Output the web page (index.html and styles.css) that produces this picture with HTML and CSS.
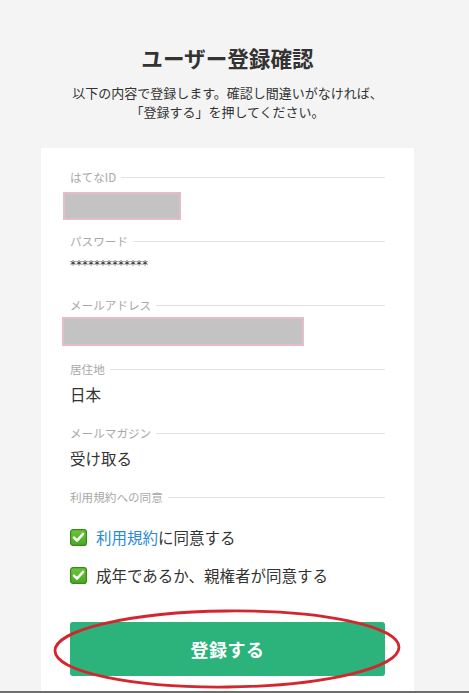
FILE: index.html
```html
<!DOCTYPE html>
<html lang="ja">
<head>
<meta charset="utf-8">
<title>ユーザー登録確認</title>
<link rel="stylesheet" href="styles.css">
</head>
<body>
<div class="page">
  <div class="column">
    <header class="head">
      <h1 class="title">ユーザー登録確認</h1>
      <p class="lead">以下の内容で登録します。確認し間違いがなければ、<br>「登録する」を押してください。</p>
    </header>
    <main class="card">
      <section class="field">
        <div class="label">はてなID</div>
        <div class="value"><span class="redact redact-id"></span></div>
      </section>
      <section class="field">
        <div class="label">パスワード</div>
        <div class="value value-pass">*************</div>
      </section>
      <section class="field field-mail">
        <div class="label">メールアドレス</div>
        <div class="value value-mail"><span class="redact redact-mail"></span></div>
      </section>
      <section class="field">
        <div class="label">居住地</div>
        <div class="value value-text">日本</div>
      </section>
      <section class="field">
        <div class="label">メールマガジン</div>
        <div class="value value-text">受け取る</div>
      </section>
      <section class="field field-agree">
        <div class="label">利用規約への同意</div>
        <ul class="checks">
          <li class="check">
            <svg class="checkbox" viewBox="0 0 17 17" width="17" height="17"><defs><linearGradient id="cg" x1="0" y1="0" x2="0" y2="1"><stop offset="0" stop-color="#6cc63a"/><stop offset="1" stop-color="#4aa824"/></linearGradient></defs><rect x="0.6" y="0.6" width="15.8" height="15.8" rx="2.5" fill="url(#cg)" stroke="#3a8a18" stroke-width="1.2"/><path d="M4 8.6 L7 11.6 L13 5" fill="none" stroke="#fff" stroke-width="2.6" stroke-linecap="round" stroke-linejoin="round"/></svg>
            <span><a class="link" href="#">利用規約</a>に同意する</span>
          </li>
          <li class="check">
            <svg class="checkbox" viewBox="0 0 17 17" width="17" height="17"><rect x="0.6" y="0.6" width="15.8" height="15.8" rx="2.5" fill="url(#cg)" stroke="#3a8a18" stroke-width="1.2"/><path d="M4 8.6 L7 11.6 L13 5" fill="none" stroke="#fff" stroke-width="2.6" stroke-linecap="round" stroke-linejoin="round"/></svg>
            <span>成年であるか、親権者が同意する</span>
          </li>
        </ul>
      </section>
      <div class="submit-wrap">
        <button class="submit" type="button">登録する</button>
        <svg class="annot" viewBox="0 0 350 82" width="350" height="82"><ellipse cx="175" cy="40" rx="172" ry="38" fill="none" stroke="#d3262f" stroke-width="2.8" transform="rotate(-0.6 175 40)"/></svg>
      </div>
    </main>
  </div>
</div>
</body>
</html>
```
FILE: styles.css
```css
* { box-sizing: border-box; }
html, body { margin: 0; padding: 0; }
body {
  background: #f4f4f4;
  font-family: "Noto Sans CJK JP", "Noto Sans", sans-serif;
  color: #333;
}
.page {
  height: 693px;
  overflow: hidden;
  border-bottom: 2px solid #6e6e6e;
}
.column {
  width: 373px;
  margin-left: 41px;
}
.head {
  padding-top: 44px;
  text-align: center;
}
.title {
  margin: 0;
  font-size: 21.6px;
  line-height: 28px;
  font-weight: 700;
  color: #333;
}
.lead {
  margin: 11px 0 0;
  font-size: 13px;
  line-height: 19px;
  color: #333;
}
.card {
  margin-top: 27px;
  background: #fff;
  padding: 21px 29px 40px;
}
.field {
  margin-bottom: 13px;
}
.field-mail {
  margin-bottom: 15px;
}
.label {
  display: flex;
  align-items: center;
  height: 16px;
  font-size: 11.6px;
  color: #a8a8a8;
}
.label::after {
  content: "";
  flex: 1;
  height: 1px;
  background: #e3e3e3;
  margin-left: 5px;
}
.value {
  margin-top: 7px;
  height: 28px;
  display: flex;
  align-items: center;
}
.value-mail {
  margin-top: 4px;
  height: 29px;
}
.value-pass {
  font-family: "DejaVu Sans", sans-serif;
  font-size: 12px;
  padding-bottom: 10px;
  color: #333;
}
.value-text {
  font-size: 15.5px;
  padding-bottom: 8px;
  color: #333;
}
.redact {
  display: block;
  height: 28px;
  margin-left: -7px;
  background: #c3c3c3;
  border: 2px solid #e6bccb;
}
.redact-id { width: 118px; }
.redact-mail { width: 242px; height: 29px; margin-left: -8px; }
.field-agree { margin-bottom: 0; }
.checks {
  list-style: none;
  margin: 18px 0 0;
  padding: 0;
  display: flex;
  flex-direction: column;
  gap: 10px;
}
.check {
  display: flex;
  align-items: center;
  gap: 9px;
  height: 28px;
  font-size: 15.5px;
  color: #333;
}
.checkbox { flex: none; }
.link {
  color: #2a8bd0;
  text-decoration: none;
}
.submit-wrap {
  position: relative;
  margin-top: 33px;
}
.submit {
  display: block;
  width: 100%;
  height: 54px;
  border: 0;
  border-radius: 3px;
  background: #2bb37b;
  color: #fff;
  font-family: "Noto Sans CJK JP", "Noto Sans", sans-serif;
  font-size: 18px;
  font-weight: 700;
  letter-spacing: 0.5px;
}
.annot {
  position: absolute;
  left: -18px;
  top: -13px;
  pointer-events: none;
}
```
